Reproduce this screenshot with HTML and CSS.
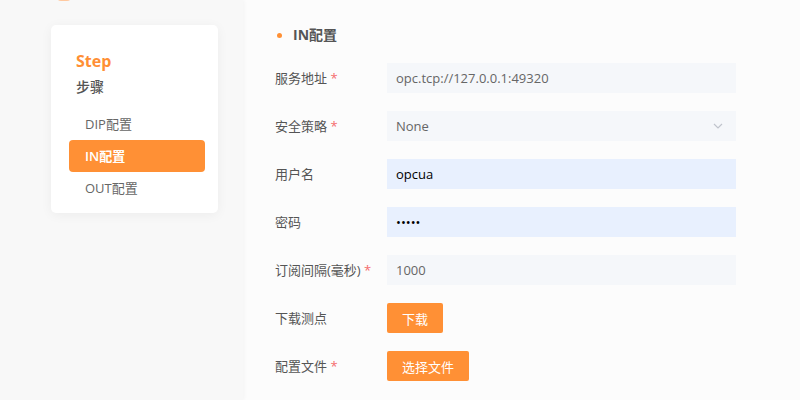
FILE: index.html
```html
<!DOCTYPE html>
<html lang="zh-CN">
<head>
    <meta charset="UTF-8">
    <meta name="viewport" content="width=device-width, initial-scale=1.0">
    <title>IN配置</title>
    <link rel="stylesheet" href="styles.css">
</head>
<body>
    <div class="layout">
        <aside class="side">
            <div class="logo"></div>
            <div class="steps">
                <div class="steps-title">Step</div>
                <div class="steps-sub">步骤</div>
                <ul class="step-list">
                    <li class="step-item">DIP配置</li>
                    <li class="step-item active">IN配置</li>
                    <li class="step-item">OUT配置</li>
                </ul>
            </div>
        </aside>

        <main class="main">
            <h2 class="section-title"><span class="dot"></span>IN配置</h2>
            <form class="form">
                <div class="form-row">
                    <label class="form-label required">服务地址</label>
                    <div class="form-field"><input class="input" type="text" value="opc.tcp://127.0.0.1:49320"></div>
                </div>
                <div class="form-row">
                    <label class="form-label required">安全策略</label>
                    <div class="form-field">
                        <div class="select">
                            <span>None</span>
                            <svg class="arrow" width="12" height="12" viewBox="0 0 12 12"><path d="M2 4l4 4 4-4" fill="none" stroke="#c0c4cc" stroke-width="1.2"/></svg>
                        </div>
                    </div>
                </div>
                <div class="form-row">
                    <label class="form-label">用户名</label>
                    <div class="form-field"><input class="input filled" type="text" value="opcua"></div>
                </div>
                <div class="form-row">
                    <label class="form-label">密码</label>
                    <div class="form-field"><input class="input filled" type="password" value="opcua"></div>
                </div>
                <div class="form-row">
                    <label class="form-label required">订阅间隔(毫秒)</label>
                    <div class="form-field"><input class="input" type="text" value="1000"></div>
                </div>
                <div class="form-row">
                    <label class="form-label">下载测点</label>
                    <div class="form-field"><button type="button" class="btn">下载</button></div>
                </div>
                <div class="form-row">
                    <label class="form-label required">配置文件</label>
                    <div class="form-field"><button type="button" class="btn">选择文件</button></div>
                </div>
            </form>
        </main>
    </div>
</body>
</html>
```

FILE: styles.css
```css
* {
    margin: 0;
    padding: 0;
    box-sizing: border-box;
}

body {
    font-family: 'Open Sans', 'Noto Sans CJK SC', sans-serif;
    font-size: 13px;
    color: #555;
    background: #fcfcfc;
    height: 400px;
    overflow: hidden;
}

.layout {
    display: flex;
    height: 100%;
}

.side {
    position: relative;
    width: 243px;
    flex-shrink: 0;
    background: #f8f8f8;
    box-shadow: 1px 0 4px rgba(0, 0, 0, 0.04);
    padding: 25px 25px 0 51px;
}

.logo {
    position: absolute;
    top: -12px;
    left: 57px;
    width: 14px;
    height: 13px;
    border-radius: 4px;
    background: #ffc9a0;
}

.steps {
    background: #fff;
    border-radius: 5px;
    box-shadow: 0 2px 12px rgba(0, 0, 0, 0.05);
    padding: 26px 13px 9px 18px;
}

.steps-title {
    color: #ff8f35;
    font-size: 16px;
    font-weight: 700;
    line-height: 20px;
    padding-left: 7px;
}

.steps-sub {
    font-size: 14px;
    font-weight: 500;
    color: #555;
    line-height: 20px;
    margin-top: 6px;
    padding-left: 7px;
}

.step-list {
    list-style: none;
    margin-top: 11px;
}

.step-item {
    height: 32px;
    line-height: 32px;
    padding-left: 16px;
    border-radius: 4px;
    color: #666;
}

.step-item.active {
    background: #ff9035;
    color: #fff;
    font-weight: 600;
}

.main {
    flex: 1;
    padding: 25px 64px 0 32px;
}

.section-title {
    display: flex;
    align-items: center;
    font-size: 14px;
    font-weight: 700;
    color: #555;
    line-height: 20px;
}

.dot {
    width: 5px;
    height: 5px;
    border-radius: 50%;
    background: #ff9035;
    margin: 0 11px 0 2px;
}

.form {
    margin-top: 18px;
}

.form-row {
    display: flex;
    align-items: center;
    margin-bottom: 18px;
}

.form-label {
    width: 112px;
    flex-shrink: 0;
    color: #555;
    margin-top: -2px;
}

.form-label.required::after {
    content: ' *';
    color: #f56c6c;
}

.form-field {
    flex: 1;
}

.input,
.select {
    width: 100%;
    height: 30px;
    border: none;
    outline: none;
    background: #f5f7fa;
    font-family: inherit;
    font-size: 13px;
    color: #666;
    padding: 0 9px;
}

.input.filled {
    background: #e8f0fe;
    color: #000;
}

.select {
    display: flex;
    align-items: center;
    justify-content: space-between;
}

.arrow {
    margin-right: 3px;
}

.btn {
    height: 30px;
    border: none;
    border-radius: 2px;
    background: #ff9035;
    color: #fff;
    font-family: inherit;
    font-size: 13px;
    padding: 0 15px;
    cursor: pointer;
}
```
